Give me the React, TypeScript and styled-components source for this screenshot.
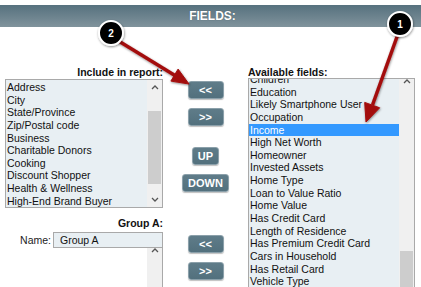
import React from 'react';
import styled, { createGlobalStyle } from 'styled-components';

const GlobalStyle = createGlobalStyle`
  html, body {
    margin: 0;
    padding: 0;
    background: #fff;
  }
  body {
    font-family: "Liberation Sans", Arial, sans-serif;
  }
`;

const reportFields = [
  'Address',
  'City',
  'State/Province',
  'Zip/Postal code',
  'Business',
  'Charitable Donors',
  'Cooking',
  'Discount Shopper',
  'Health & Wellness',
  'High-End Brand Buyer',
];

const availableFields = [
  'Children',
  'Education',
  'Likely Smartphone User',
  'Occupation',
  'Income',
  'High Net Worth',
  'Homeowner',
  'Invested Assets',
  'Home Type',
  'Loan to Value Ratio',
  'Home Value',
  'Has Credit Card',
  'Length of Residence',
  'Has Premium Credit Card',
  'Cars in Household',
  'Has Retail Card',
  'Vehicle Type',
  'Vehicle Year',
];

function Chevron({ down }: { down?: boolean }) {
  return (
    <svg width="8" height="5" viewBox="0 0 8 5">
      <path
        d={down ? 'M1 1 L4 4 L7 1' : 'M1 4 L4 1 L7 4'}
        stroke="#555"
        strokeWidth="1.3"
        fill="none"
      />
    </svg>
  );
}

interface ScrollbarProps {
  thumbTop: number;
  thumbHeight: number;
  showDown?: boolean;
}

function Scrollbar({ thumbTop, thumbHeight, showDown = true }: ScrollbarProps) {
  return (
    <Track>
      <ArrowCell>
        <Chevron />
      </ArrowCell>
      <Thumb $top={thumbTop} $height={thumbHeight} />
      {showDown && (
        <ArrowCell $bottom>
          <Chevron down />
        </ArrowCell>
      )}
    </Track>
  );
}

export default function App() {
  return (
    <Page>
      <GlobalStyle />
      <Header>FIELDS:</Header>
      <Content>
        <LeftCol>
          <Label $align="right">Include in report:</Label>
          <ListBox $height={129}>
            <Items>
              {reportFields.map((f) => (
                <Item key={f}>{f}</Item>
              ))}
            </Items>
            <Scrollbar thumbTop={16} thumbHeight={73} />
          </ListBox>

          <Label $align="right" $top={9}>Group A:</Label>
          <NameRow>
            <NameLabel>Name:</NameLabel>
            <NameInput readOnly value="Group A" />
          </NameRow>
          <GroupBox>
            <GroupItems />
            <Scrollbar thumbTop={200} thumbHeight={0} showDown={false} />
          </GroupBox>
        </LeftCol>

        <MiddleCol>
          <ButtonStack $top={54}>
            <ActionButton $wide>&lt;&lt;</ActionButton>
            <ActionButton $wide>&gt;&gt;</ActionButton>
          </ButtonStack>
          <ButtonStack $top={21}>
            <ActionButton>UP</ActionButton>
            <ActionButton>DOWN</ActionButton>
          </ButtonStack>
          <ButtonStack $top={43}>
            <ActionButton $wide>&lt;&lt;</ActionButton>
            <ActionButton $wide>&gt;&gt;</ActionButton>
          </ButtonStack>
        </MiddleCol>

        <RightCol>
          <Label $align="left" $gap={0}>Available fields:</Label>
          <ListBox $height={230}>
            <Items $offset={-7}>
              {availableFields.map((f) => (
                <Item key={f} $selected={f === 'Income'}>
                  {f}
                </Item>
              ))}
            </Items>
            <Scrollbar thumbTop={167} thumbHeight={80} />
          </ListBox>
        </RightCol>
      </Content>

      <Callouts width="421" height="287" viewBox="0 0 421 287">
        <defs>
          <filter id="shadow" x="-30%" y="-30%" width="160%" height="160%">
            <feDropShadow dx="0.5" dy="1" stdDeviation="1.2" floodColor="#000" floodOpacity="0.45" />
          </filter>
        </defs>
        <g filter="url(#shadow)" fill="#a30d0d" stroke="#a30d0d">
          <line x1="117" y1="40" x2="175" y2="75.5" strokeWidth="3.5" />
          <polygon points="189,84 170.9,81.1 178.1,69.1" strokeWidth="1" />
          <line x1="398" y1="34" x2="372.5" y2="105" strokeWidth="3.5" />
          <polygon points="366,122 364.7,102.4 379.7,107.8" strokeWidth="1" />
        </g>
        <g filter="url(#shadow)">
          <circle cx="111" cy="33" r="12" fill="#000" stroke="#fff" strokeWidth="2" />
          <circle cx="400" cy="24" r="12" fill="#000" stroke="#fff" strokeWidth="2" />
        </g>
        <CalloutText x="111" y="36.5">2</CalloutText>
        <CalloutText x="400" y="27.5">1</CalloutText>
      </Callouts>
    </Page>
  );
}

const Page = styled.div`
  position: relative;
  width: 421px;
  height: 287px;
  overflow: hidden;
  background: #fff;
`;

const Header = styled.div`
  margin-top: 5px;
  height: 22px;
  display: flex;
  align-items: center;
  justify-content: center;
  padding-left: 4px;
  background: linear-gradient(#56717e, #80939c);
  color: #fff;
  font-size: 12px;
  font-weight: bold;
  text-shadow: 0 0 1px rgba(0, 0, 0, 0.3);
`;

const Content = styled.div`
  display: flex;
  padding-left: 5px;
`;

const LeftCol = styled.div`
  width: 158px;
  display: flex;
  flex-direction: column;
  padding-top: 39px;
`;

const MiddleCol = styled.div`
  width: 85px;
  display: flex;
  flex-direction: column;
  align-items: center;
`;

const RightCol = styled.div`
  width: 167px;
  display: flex;
  flex-direction: column;
  padding-top: 39px;
`;

const Label = styled.div<{ $align: 'left' | 'right'; $top?: number; $gap?: number }>`
  margin-top: ${(p) => p.$top ?? 0}px;
  margin-bottom: ${(p) => p.$gap ?? 1}px;
  height: 12px;
  line-height: 12px;
  font-size: 10.5px;
  font-weight: bold;
  color: #111;
  text-align: ${(p) => p.$align};
`;

const ListBox = styled.div<{ $height: number }>`
  box-sizing: border-box;
  height: ${(p) => p.$height}px;
  display: flex;
  border: 1px solid #a9a9a9;
  background: #e8eff3;
`;

const Items = styled.div<{ $offset?: number }>`
  flex: 1;
  overflow: hidden;
  padding-top: 1px;

  & > :first-child {
    margin-top: ${(p) => p.$offset ?? 0}px;
  }
`;

const Item = styled.div<{ $selected?: boolean }>`
  height: 12.65px;
  line-height: 12.65px;
  padding-left: 1px;
  font-size: 10.5px;
  white-space: nowrap;
  color: ${(p) => (p.$selected ? '#fff' : '#111')};
  background: ${(p) => (p.$selected ? '#3399ff' : 'transparent')};
`;

const Track = styled.div`
  width: 15px;
  display: flex;
  flex-direction: column;
  background: #f0f0f0;
`;

const ArrowCell = styled.div<{ $bottom?: boolean }>`
  height: 15px;
  display: flex;
  align-items: center;
  justify-content: center;
  margin-top: ${(p) => (p.$bottom ? 'auto' : '0')};
`;

const Thumb = styled.div<{ $top: number; $height: number }>`
  margin-top: ${(p) => p.$top}px;
  height: ${(p) => p.$height}px;
  margin-left: 1px;
  margin-right: 1px;
  background: #cdcdcd;
  flex-shrink: 0;
`;

const NameRow = styled.div`
  margin-top: 2px;
  display: flex;
  justify-content: flex-end;
  align-items: center;
  gap: 2px;
`;

const NameLabel = styled.span`
  font-size: 10.5px;
  color: #222;
`;

const NameInput = styled.input`
  box-sizing: border-box;
  width: 110px;
  height: 16px;
  margin: 0;
  padding: 0 0 0 6px;
  border: 1px solid #a9a9a9;
  background: #e8eff3;
  font-family: "Liberation Sans", Arial, sans-serif;
  font-size: 10.5px;
  color: #111;
  outline: none;
`;

const GroupBox = styled.div`
  align-self: flex-end;
  box-sizing: border-box;
  width: 110px;
  height: 50px;
  display: flex;
  border-right: 1px solid #a9a9a9;
  background: #fff;
`;

const GroupItems = styled.div`
  flex: 1;
`;

const ButtonStack = styled.div<{ $top: number }>`
  margin-top: ${(p) => p.$top}px;
  display: flex;
  flex-direction: column;
  align-items: center;
  gap: 9px;
`;

const ActionButton = styled.button<{ $wide?: boolean }>`
  box-sizing: border-box;
  height: 18px;
  min-width: ${(p) => (p.$wide ? '36px' : '0')};
  margin: 0;
  padding: 0 5px;
  border: 1px solid #8ba0aa;
  border-radius: 3px;
  background: linear-gradient(#5f7c89, #52707d);
  box-shadow: 0 1px 1px rgba(0, 0, 0, 0.25);
  color: #fff;
  font-family: "Liberation Sans", Arial, sans-serif;
  font-size: 11px;
  font-weight: bold;
  line-height: 16px;
`;

const Callouts = styled.svg`
  position: absolute;
  left: 0;
  top: 0;
  pointer-events: none;
`;

const CalloutText = styled.text`
  fill: #fff;
  font-family: "Liberation Sans", Arial, sans-serif;
  font-size: 10px;
  font-weight: bold;
  text-anchor: middle;
`;
